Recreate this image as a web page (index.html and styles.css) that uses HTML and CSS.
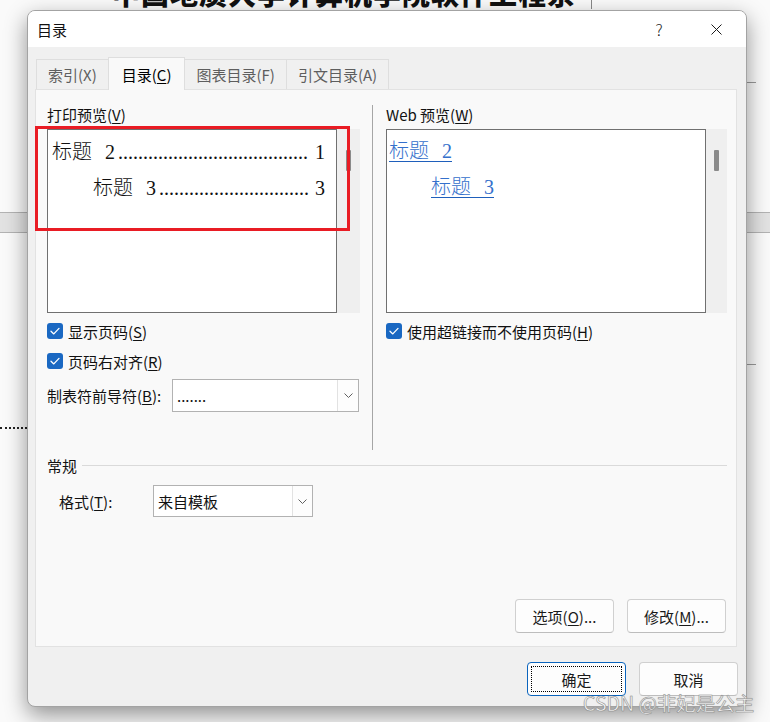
FILE: index.html
```html
<!DOCTYPE html>
<html lang="zh-CN">
<head>
<meta charset="utf-8">
<title>目录</title>
<link rel="stylesheet" href="styles.css">
</head>
<body>
<div class="desk">
  <div class="doc-title">中国地质大学计算机学院软件工程系</div>
  <div class="doc-caret"></div>
  <div class="band band-l"></div>
  <div class="band band-r"></div>
  <div class="dotline"></div>
  <div class="tick tick-1"></div>
  <div class="tick tick-2"></div>

  <div class="dialog">
    <div class="titlebar">
      <span class="title">目录</span>
      <span class="help">?</span>
      <span class="close"><svg width="11" height="11" viewBox="0 0 11 11"><path d="M0.5 0.5 L10.5 10.5 M10.5 0.5 L0.5 10.5" stroke="#1b1b1b" stroke-width="1" fill="none"/></svg></span>
    </div>

    <div class="tabs">
      <div class="tab">索引(X)</div>
      <div class="tab active">目录(<u>C</u>)</div>
      <div class="tab">图表目录(F)</div>
      <div class="tab">引文目录(A)</div>
    </div>

    <div class="panel">
      <div class="columns">
        <div class="col col-left">
          <div class="label">打印预览(<u>V</u>)</div>
          <div class="preview-wrap">
            <div class="preview print">
              <div class="toc"><span class="zh">标题</span><span class="sp">&ensp;</span><span class="num">2</span><span class="dots">......................................</span><span class="pg">1</span></div>
              <div class="toc l2"><span class="zh">标题</span><span class="sp">&ensp;</span><span class="num">3</span><span class="dots">..............................</span><span class="pg">3</span></div>
            </div>
            <div class="scroll scroll-print"><div class="thumb"></div></div>
          </div>
          <div class="check">
            <span class="box"><svg width="16" height="16" viewBox="0 0 16 16"><path d="M4 8.3 L6.8 10.9 L12 5.4" stroke="#fff" stroke-width="1.3" fill="none" stroke-linecap="round" stroke-linejoin="round"/></svg></span>
            <span>显示页码(<u>S</u>)</span>
          </div>
          <div class="check check-2">
            <span class="box"><svg width="16" height="16" viewBox="0 0 16 16"><path d="M4 8.3 L6.8 10.9 L12 5.4" stroke="#fff" stroke-width="1.3" fill="none" stroke-linecap="round" stroke-linejoin="round"/></svg></span>
            <span>页码右对齐(<u>R</u>)</span>
          </div>
          <div class="field-row">
            <span class="field-label">制表符前导符(<u>B</u>):</span>
            <div class="combo combo-leader">
              <span class="combo-text">.......</span>
              <span class="combo-arrow"><svg width="9" height="5" viewBox="0 0 9 5"><path d="M0.5 0.5 L4.5 4.5 L8.5 0.5" stroke="#606060" stroke-width="1" fill="none"/></svg></span>
            </div>
          </div>
        </div>
        <div class="sep"></div>
        <div class="col col-right">
          <div class="label">Web 预览(<u>W</u>)</div>
          <div class="preview-wrap">
            <div class="preview web">
              <div class="wl"><a class="link">标题<span class="sp">&ensp;</span>2</a></div>
              <div class="wl l2"><a class="link">标题<span class="sp">&ensp;</span>3</a></div>
            </div>
            <div class="scroll scroll-web"><div class="thumb"></div></div>
          </div>
          <div class="check">
            <span class="box"><svg width="16" height="16" viewBox="0 0 16 16"><path d="M4 8.3 L6.8 10.9 L12 5.4" stroke="#fff" stroke-width="1.3" fill="none" stroke-linecap="round" stroke-linejoin="round"/></svg></span>
            <span>使用超链接而不使用页码(<u>H</u>)</span>
          </div>
        </div>
      </div>

      <div class="group"><span>常规</span><span class="group-line"></span></div>

      <div class="format-row">
        <span class="format-label">格式(<u>T</u>):</span>
        <div class="combo combo-format">
          <span class="combo-text">来自模板</span>
          <span class="combo-arrow"><svg width="9" height="5" viewBox="0 0 9 5"><path d="M0.5 0.5 L4.5 4.5 L8.5 0.5" stroke="#606060" stroke-width="1" fill="none"/></svg></span>
        </div>
      </div>

      <div class="spacer"></div>

      <div class="btn-row">
        <button class="btn">选项(<u>O</u>)...</button>
        <button class="btn">修改(<u>M</u>)...</button>
      </div>
    </div>

    <div class="footer">
      <button class="btn btn-default">确定</button>
      <button class="btn">取消</button>
    </div>
  </div>

  <div class="annot"></div>
  <div class="watermark">CSDN @非妃是公主</div>
</div>
</body>
</html>
```

FILE: styles.css
```css
* { box-sizing: border-box; }
html, body { margin: 0; padding: 0; }
body {
  width: 770px;
  height: 722px;
  overflow: hidden;
  background: #fafafa;
  font-family: "Noto Sans CJK SC", "Noto Sans", sans-serif;
  font-size: 15px;
  color: #1a1a1a;
}
u { text-decoration: underline; text-underline-offset: 2px; text-decoration-thickness: 1px; }

.desk {
  position: relative;
  width: 770px;
  height: 722px;
  overflow: hidden;
  background: #fafafa;
}

/* document behind the dialog */
.doc-title {
  position: absolute;
  left: 112px;
  top: -21px;
  font-size: 28px;
  line-height: 28px;
  font-weight: 900;
  letter-spacing: 1px;
  color: #111;
  white-space: nowrap;
}
.doc-caret {
  position: absolute;
  left: 591px;
  top: 0;
  width: 1px;
  height: 9px;
  background: #888;
}
.band {
  position: absolute;
  top: 212px;
  height: 21px;
  background: #e2e2e2;
  border-top: 1px solid #b3b3b3;
  border-bottom: 1px solid #b3b3b3;
}
.band-l { left: 0; width: 30px; }
.band-r { left: 744px; width: 26px; }
.dotline {
  position: absolute;
  left: 0;
  top: 427px;
  width: 27px;
  border-top: 2px dotted #222;
}
.tick {
  position: absolute;
  left: 746px;
  width: 10px;
  height: 1px;
  background: #9a9a9a;
}
.tick-1 { top: 82px; }
.tick-2 { top: 364px; }

/* dialog window */
.dialog {
  position: absolute;
  left: 27px;
  top: 10px;
  width: 720px;
  height: 697px;
  background: #f0f0f0;
  border: 1px solid #a3a3a3;
  border-radius: 8px;
  box-shadow: 0 8px 22px rgba(0, 0, 0, 0.42);
  display: flex;
  flex-direction: column;
  overflow: hidden;
}
.titlebar {
  flex: none;
  height: 36px;
  background: #fff;
  display: flex;
  align-items: center;
  padding: 0 10px 0 9px;
}
.title { font-size: 15px; color: #111; }
.help {
  margin-left: auto;
  width: 40px;
  text-align: center;
  font-size: 16px;
  font-weight: 300;
  color: #1b1b1b;
}
.close {
  width: 40px;
  margin-left: 17px;
  display: flex;
  justify-content: center;
}

/* tabs */
.tabs {
  flex: none;
  display: flex;
  align-items: flex-end;
  height: 32px;
  margin: 10px 0 0 8px;
  position: relative;
  z-index: 1;
}
.tab {
  height: 30px;
  padding: 0 11px;
  border: 1px solid #dedede;
  border-bottom: none;
  background: #f0f0f0;
  color: #5e5e5e;
  display: flex;
  align-items: center;
  margin-left: -1px;
}
.tab:first-child { margin-left: 0; }
.tab.active {
  height: 33px;
  margin-bottom: -1px;
  padding: 0 13px;
  background: #f9f9f9;
  color: #000;
  position: relative;
  z-index: 2;
}

.panel {
  flex: none;
  height: 558px;
  margin: 0 9px 0 7px;
  background: #f9f9f9;
  border: 1px solid #e2e2e2;
  padding: 15px 9px 13px 11px;
  display: flex;
  flex-direction: column;
}
.columns {
  display: flex;
  height: 345px;
  flex: none;
}
.col { display: flex; flex-direction: column; }
.col-left { width: 313px; }
.col-right { flex: 1; }
.sep {
  width: 1px;
  background: #a6a6a6;
  margin: 0 13px 0 12px;
}
.label {
  height: 20px;
  line-height: 20px;
  margin-bottom: 4px;
  color: #111;
}

.preview-wrap { display: flex; height: 184px; }
.preview {
  background: #fff;
  border: 1px solid #707070;
  overflow: hidden;
}
.print { width: 290px; padding: 3px 11px 0 4px; }
.web { width: 320px; padding: 3px 0 0 2px; }
.scroll {
  flex: 1;
  background: #efefef;
  display: flex;
  justify-content: center;
  padding-top: 21px;
}
.thumb { width: 5px; height: 21px; background: #8a8a8a; border-radius: 1px; }

.toc {
  display: flex;
  align-items: baseline;
  height: 36px;
  line-height: 36px;
  font-family: "Liberation Serif", "Noto Sans CJK SC", serif;
  font-size: 20px;
  color: #111;
  white-space: nowrap;
}
.toc .zh { font-family: "Noto Sans CJK SC", sans-serif; font-weight: 300; }
.sp { letter-spacing: 3px; }
.toc .dots { margin-left: 3px; }
.toc .pg { margin-left: auto; }
.toc.l2 { padding-left: 41px; }

.wl {
  height: 36px;
  line-height: 36px;
  font-family: "Liberation Serif", "Noto Sans CJK SC", serif;
  font-size: 20px;
  white-space: nowrap;
}
.wl.l2 { padding-left: 42px; }
.link {
  color: #3470cc;
  text-decoration: underline;
  text-decoration-color: #1f5fbb;
  text-underline-offset: 3px;
  text-decoration-thickness: 1px;
  font-family: "Liberation Serif", "Noto Sans CJK SC", serif;
  font-weight: 300;
}

.check {
  display: flex;
  align-items: center;
  gap: 5px;
  height: 20px;
  margin-top: 8px;
  color: #111;
}
.check-2 { margin-top: 10px; }
.box {
  width: 16px;
  height: 16px;
  border-radius: 3px;
  background: #1a68c2;
  display: flex;
}

.field-row {
  display: flex;
  align-items: center;
  height: 33px;
  margin-top: 8px;
}
.field-label { width: 125px; color: #111; }

.combo {
  display: flex;
  background: #fff;
  border: 1px solid #b2b2b2;
}
.combo-leader { width: 187px; height: 33px; }
.combo-format { width: 160px; height: 32px; }
.combo-text {
  flex: 1;
  padding-left: 4px;
  display: flex;
  align-items: center;
  color: #111;
}
.combo-arrow {
  width: 21px;
  border-left: 1px solid #e2e2e2;
  background: #fdfdfd;
  display: flex;
  align-items: center;
  justify-content: center;
}
.combo-format .combo-arrow { width: 20px; }

.group {
  display: flex;
  align-items: center;
  gap: 5px;
  height: 20px;
  margin-top: 5px;
  color: #111;
}
.group-line { flex: 1; height: 1px; background: #dadada; }

.format-row {
  display: flex;
  align-items: center;
  margin-top: 10px;
  padding-left: 12px;
}
.format-label { width: 94px; color: #111; }

.spacer { flex: 1; }

.btn-row {
  display: flex;
  justify-content: flex-end;
  gap: 13px;
  margin-right: 1px;
}
.btn {
  width: 99px;
  height: 34px;
  background: #fdfdfd;
  border: 1px solid #d0d0d0;
  border-bottom-color: #bdbdbd;
  border-radius: 4px;
  font-family: "Noto Sans CJK SC", "Noto Sans", sans-serif;
  font-size: 15px;
  color: #1a1a1a;
  padding: 0;
}
.btn-default {
  border: 1px solid #0a64bd;
  position: relative;
}
.btn-default::after {
  content: "";
  position: absolute;
  inset: 3px;
  border: 1px dotted #000;
}

.footer {
  flex: none;
  display: flex;
  justify-content: flex-end;
  gap: 13px;
  padding: 15px 8px 10px 0;
}

/* overlays */
.annot {
  position: absolute;
  left: 35px;
  top: 126px;
  width: 315px;
  height: 105px;
  border: 3px solid #e91c24;
}
.watermark {
  position: absolute;
  left: 583px;
  top: 690px;
  font-size: 19.5px;
  line-height: 26px;
  color: #f6f6f6;
  -webkit-text-stroke: 0.5px #8c8c8c;
  text-shadow: 0 0 1px rgba(0, 0, 0, 0.25);
  white-space: nowrap;
}
```
